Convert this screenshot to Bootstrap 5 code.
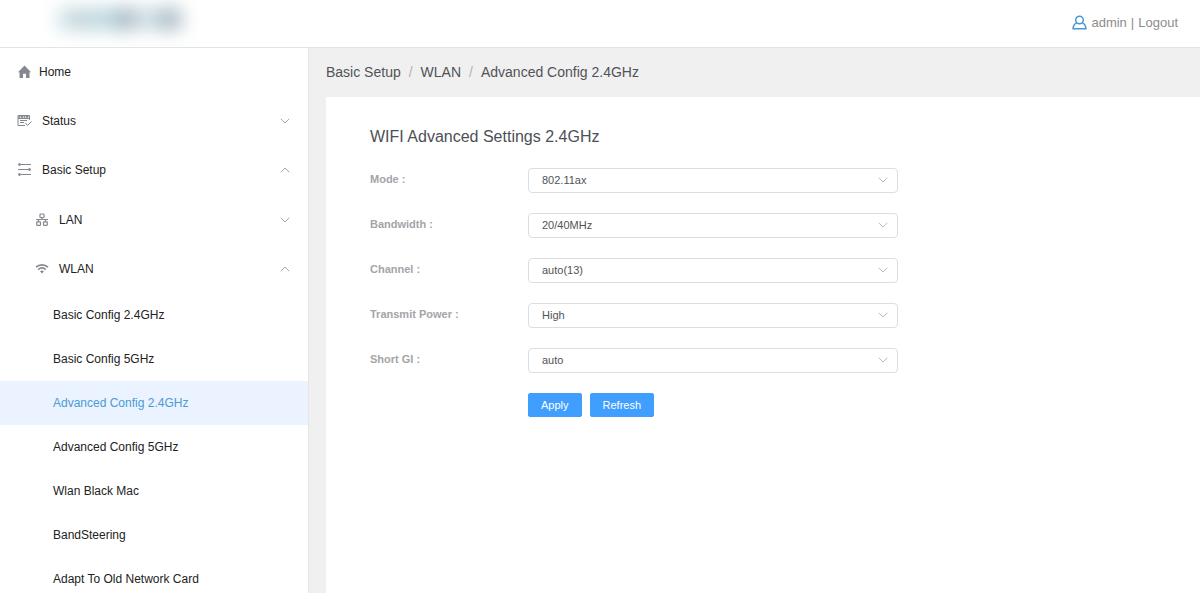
<!DOCTYPE html>
<html lang="en">
<head>
<meta charset="utf-8">
<meta name="viewport" content="width=device-width, initial-scale=1">
<title>Advanced Config 2.4GHz</title>
<link href="https://cdn.jsdelivr.net/npm/bootstrap@5.3.0/dist/css/bootstrap.min.css" rel="stylesheet">
<style>
  body { font-family: "Liberation Sans", Arial, sans-serif; font-size: 12px; color: #222; background: #fff; }
  a { color: inherit; text-decoration: none; }
  .topbar { height: 48px; border-bottom: 1px solid #e4e4e4; padding: 0 22px 2px 58px; font-size: 13px; color: #8c8c8c; }
  .brand-blur { width: 124px; height: 22px; margin-bottom: 8px; filter: blur(9px);
    background: linear-gradient(90deg, #cfe5e9 0, #bfd0d6 22%, #bfe0e6 38%, #9fb5c2 52%, #b9c7cd 62%, #dcebee 72%, #a3b9c4 86%, #b6c2c9 100%); }
  .sidebar { width: 309px; border-right: 1px solid #e6e6e6; overflow-y: auto; scrollbar-width: none; }
  .sidebar::-webkit-scrollbar { display: none; }
  .side-item { height: 49px; padding: 0 18px 2px 17px; border: 0; background: none; width: 100%; color: #222; text-align: left; }
  .side-item.level-two { padding: 0 18px 0 35px; }
  .side-item svg { color: #85888e; flex: none; }
  .side-item .caret { color: #9a9da3; }
  .side-item span { margin-left: 10px; }
  .side-leaf { height: 44px; padding-left: 53px; }
  .side-leaf.current { background: #eaf3ff; color: #4a9ad4; }
  .workspace { background: #f0f0f0; padding-left: 17px; }
  .crumbs { height: 49px; font-size: 14px; color: #505357; }
  .crumbs .breadcrumb-item + .breadcrumb-item { padding-left: 8px; }
  .crumbs .breadcrumb-item + .breadcrumb-item::before { padding-right: 8px; color: #b0b3b8; }
  .panel { background: #fff; padding: 30px 44px; }
  .panel h1 { font-size: 16px; line-height: 20px; margin: 0 0 21px; color: #4c5057; font-weight: 400; }
  .fields { max-width: 528px; display: grid; grid-template-columns: 158px 1fr; row-gap: 20px; font-size: 11px; }
  .fields label { color: #a3a5a8; font-weight: 700; line-height: 23px; }
  .fields .form-select { height: 25px; font-size: 11px; line-height: 15px; padding: 4px 32px 4px 13px; border-color: #dddee1; border-radius: 4px; color: #505357;
    background-image: url("data:image/svg+xml,%3Csvg xmlns='http://www.w3.org/2000/svg' viewBox='0 0 10 6'%3E%3Cpath d='M.7.7 5 5 9.3.7' fill='none' stroke='%23b8bbc1'/%3E%3C/svg%3E");
    background-size: 10px 6px; background-position: right 9px top 8px; }
  .fields .btn { --bs-btn-bg: #409eff; --bs-btn-border-color: #409eff; --bs-btn-padding-x: 12px; --bs-btn-padding-y: 3px; --bs-btn-font-size: 11px; --bs-btn-border-radius: 2px; line-height: 16px; }
</style>
</head>
<body>
<div class="vh-100 d-flex flex-column overflow-hidden">
  <header class="topbar d-flex align-items-center justify-content-between flex-shrink-0">
    <div class="brand-blur" role="img" aria-label="Logo"></div>
    <div class="d-flex align-items-center gap-1">
      <svg width="15" height="16" viewBox="0 0 15 16" fill="none" stroke="#4a96d8" stroke-width="1.5" stroke-linejoin="round" aria-hidden="true"><circle cx="7.5" cy="5" r="3.8"/><path d="M4.700 7.900C2.400 9 1.200 11 1 13.700h13C13.800 11 12.600 9 10.300 7.900"/></svg>
      <a href="#">admin</a><span>|</span><a href="#">Logout</a>
    </div>
  </header>
  <div class="d-flex flex-grow-1 overflow-hidden">
    <nav class="sidebar flex-shrink-0" aria-label="Main menu">
      <a class="side-item d-flex align-items-center" href="#">
        <svg class="me-2" width="14" height="14" viewBox="0 0 14 14" fill="currentColor" aria-hidden="true"><path d="M7.500.5 14 7.200h-1.500V13H9V8.700H6V13H2.500V7.200H1z"/></svg>Home
      </a>
      <button class="side-item d-flex align-items-center" type="button">
        <svg width="15" height="13" viewBox="0 0 15 13" fill="none" stroke="currentColor" aria-hidden="true"><path d="M12.500 6V1.500H1v10h7M1 4.500h11.500"/><path d="M1.500 2.900h10.500" stroke-width="1.600" stroke-dasharray="2 .5"/><path d="M3 6.500h7M3 8.500h4"/><path d="m8.500 9 2 2.500 4-4"/></svg>
        <span class="flex-grow-1">Status</span>
        <svg class="caret" width="10" height="6" viewBox="0 0 10 6" fill="none" stroke="currentColor" aria-hidden="true"><path d="M.7.7 5 5 9.300.7" stroke-width=".9"/></svg>
      </button>
      <button class="side-item d-flex align-items-center" type="button">
        <svg width="15" height="13" viewBox="0 0 15 13" fill="currentColor" stroke="currentColor" aria-hidden="true"><path d="M4 1.500h10M1 6.500h10M4 11.500h10"/><circle cx="2.500" cy="1.500" r="1"/><circle cx="12.500" cy="6.500" r="1"/><circle cx="2.500" cy="11.500" r="1"/></svg>
        <span class="flex-grow-1">Basic Setup</span>
        <svg class="caret" width="10" height="6" viewBox="0 0 10 6" fill="none" stroke="currentColor" aria-hidden="true"><path d="M.7 5.300 5 1l4.300 4.300" stroke-width=".9"/></svg>
      </button>
      <button class="side-item level-two d-flex align-items-center" type="button">
        <svg width="14" height="13" viewBox="0 0 14 13" fill="none" stroke="currentColor" stroke-width="1.200" aria-hidden="true"><rect x="5" y="1" width="4" height="3.500" rx=".5"/><path d="M7 4.500v2M1 6.500h12M3.500 6.500V9M10.500 6.500V9"/><rect x="1.700" y="8.800" width="3.800" height="3.500" rx=".5"/><rect x="8.500" y="8.800" width="3.800" height="3.500" rx=".5"/></svg>
        <span class="flex-grow-1">LAN</span>
        <svg class="caret" width="10" height="6" viewBox="0 0 10 6" fill="none" stroke="currentColor" aria-hidden="true"><path d="M.7.7 5 5 9.300.7" stroke-width=".9"/></svg>
      </button>
      <button class="side-item level-two d-flex align-items-center" type="button">
        <svg width="14" height="11" viewBox="0 0 14 11" fill="none" stroke="currentColor" stroke-width="1.700" aria-hidden="true"><path d="M1 4.200c3.500-3.200 8.500-3.200 12 0M3.200 6.600c2.300-2 5.300-2 7.600 0"/><path d="M5 8.200c1.300-1 2.700-1 4 0l-2 2.200z" fill="currentColor" stroke="none"/></svg>
        <span class="flex-grow-1">WLAN</span>
        <svg class="caret" width="10" height="6" viewBox="0 0 10 6" fill="none" stroke="currentColor" aria-hidden="true"><path d="M.7 5.300 5 1l4.300 4.300" stroke-width=".9"/></svg>
      </button>
      <a class="side-leaf d-flex align-items-center" href="#">Basic Config 2.4GHz</a>
      <a class="side-leaf d-flex align-items-center" href="#">Basic Config 5GHz</a>
      <a class="side-leaf current d-flex align-items-center" href="#" aria-current="page">Advanced Config 2.4GHz</a>
      <a class="side-leaf d-flex align-items-center" href="#">Advanced Config 5GHz</a>
      <a class="side-leaf d-flex align-items-center" href="#">Wlan Black Mac</a>
      <a class="side-leaf d-flex align-items-center" href="#">BandSteering</a>
      <a class="side-leaf d-flex align-items-center" href="#">Adapt To Old Network Card</a>
    </nav>
    <main class="workspace flex-grow-1 d-flex flex-column overflow-hidden">
      <nav class="crumbs d-flex align-items-center flex-shrink-0" aria-label="Breadcrumb">
        <ol class="breadcrumb mb-0">
          <li class="breadcrumb-item"><a href="#">Basic Setup</a></li>
          <li class="breadcrumb-item"><a href="#">WLAN</a></li>
          <li class="breadcrumb-item"><a href="#">Advanced Config 2.4GHz</a></li>
        </ol>
      </nav>
      <section class="panel flex-grow-1 overflow-auto">
        <h1>WIFI Advanced Settings 2.4GHz</h1>
        <form class="fields">
          <label for="mode">Mode :</label>
          <select class="form-select" id="mode"><option>802.11ax</option></select>
          <label for="bandwidth">Bandwidth :</label>
          <select class="form-select" id="bandwidth"><option>20/40MHz</option></select>
          <label for="channel">Channel :</label>
          <select class="form-select" id="channel"><option>auto(13)</option></select>
          <label for="power">Transmit Power :</label>
          <select class="form-select" id="power"><option>High</option></select>
          <label for="gi">Short GI :</label>
          <select class="form-select" id="gi"><option>auto</option></select>
          <span></span>
          <div class="d-flex gap-2">
            <button class="btn btn-primary" type="button">Apply</button>
            <button class="btn btn-primary" type="button">Refresh</button>
          </div>
        </form>
      </section>
    </main>
  </div>
</div>
<script src="https://cdn.jsdelivr.net/npm/bootstrap@5.3.0/dist/js/bootstrap.bundle.min.js"></script>
</body>
</html>
